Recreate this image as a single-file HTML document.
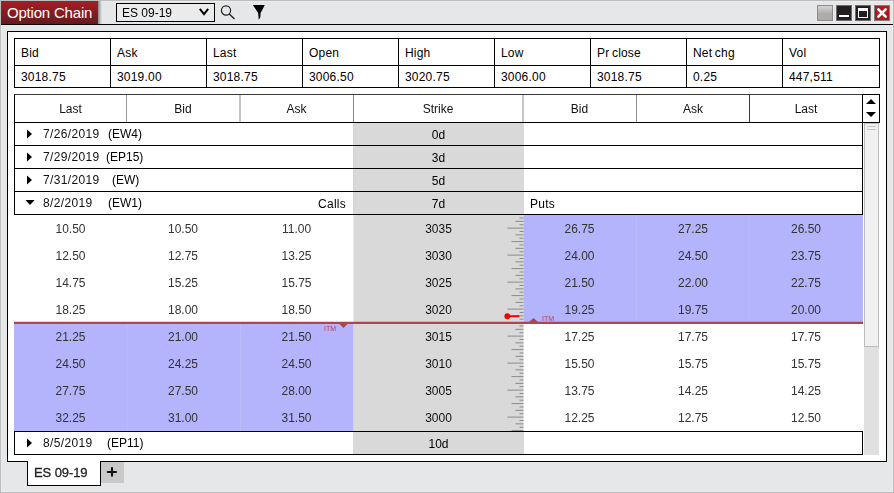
<!DOCTYPE html><html><head><meta charset="utf-8"><style>
*{margin:0;padding:0;box-sizing:border-box}
html,body{width:894px;height:493px;overflow:hidden}
body{position:relative;background:#e6e7e8;font-family:"Liberation Sans",sans-serif;font-size:12px;color:#000}
.a{position:absolute}
.t{position:absolute;white-space:nowrap;line-height:14px;will-change:transform}
.s{will-change:auto}
.c{text-align:center}
.r{text-align:right}
</style></head><body>
<div class="a" style="left:0;top:0;width:894px;height:493px;border:1px solid #bdbdbd"></div>
<div class="a" style="left:1px;top:1px;width:892px;height:491px;border:1px solid #ebecec"></div>
<div class="a" style="left:98px;top:1px;width:4px;height:23px;background:linear-gradient(to right,#8a8b8c,#e6e7e8)"></div>
<div class="a" style="left:1px;top:1px;width:97px;height:23px;background:linear-gradient(#b1161e,#a31d24 1px,#661a1e)"></div>
<div class="t s" style="left:7px;top:4px;font-size:15px;letter-spacing:-0.2px;line-height:17px;color:#fff">Option Chain</div>
<div class="a" style="left:1px;top:24px;width:892px;height:1px;background:#000"></div>
<div class="a" style="left:116px;top:3px;width:99px;height:19px;border:1px solid #000;background:#ebebeb"></div>
<div class="t" style="left:122px;top:6px;font-size:12px">ES 09-19</div>
<svg class="a" style="left:196px;top:6px" width="16" height="12"><path d="M3.8 2.9 L8 8.2 L12.2 2.9" fill="none" stroke="#000" stroke-width="1.9"/></svg>
<svg class="a" style="left:218px;top:3px" width="20" height="20"><circle cx="8" cy="7.5" r="4.6" fill="none" stroke="#222" stroke-width="1.2"/><path d="M11.3 11 L16.5 16" stroke="#222" stroke-width="1.4"/></svg>
<svg class="a" style="left:250px;top:3px" width="18" height="18"><path d="M2.8 2 H14.8 L10.6 10 L10.3 14.5 L8.7 16.8 L8.2 10 Z" fill="#000"/></svg>
<div class="a" style="left:817px;top:5px;width:16px;height:16px;border:1px solid #8d8d8d;background:linear-gradient(#d6d4d4,#b0acac 55%,#adaaaa)"></div>
<div class="a" style="left:836px;top:5px;width:16px;height:16px;border:1px solid #6d6d6d;background:#231f20"></div>
<div class="a" style="left:839px;top:15px;width:10px;height:2px;background:#fff"></div>
<div class="a" style="left:855px;top:5px;width:16px;height:16px;border:1px solid #6d6d6d;background:#231f20"></div>
<div class="a" style="left:858px;top:8px;width:10px;height:10px;border:1px solid #fff;border-top-width:3px"></div>
<div class="a" style="left:874px;top:5px;width:16px;height:16px;border:1px solid #7a8080;background:#ab191e"></div>
<svg class="a" style="left:874px;top:5px" width="16" height="16"><path d="M4.4 4.4 L11.6 11.6 M11.6 4.4 L4.4 11.6" stroke="#fff" stroke-width="2.7" stroke-linecap="round"/></svg>
<div class="a" style="left:7px;top:31px;width:880px;height:431px;border:1px solid #000;background:#fff"></div>
<div class="a" style="left:14px;top:38px;width:866px;height:50px;border:1px solid #000"></div>
<div class="a" style="left:14px;top:65px;width:866px;height:1px;background:#000"></div>
<div class="t s" style="left:21px;top:46px;letter-spacing:0.2px;word-spacing:-1px">Bid</div>
<div class="t s" style="left:21px;top:70px;letter-spacing:0.2px">3018.75</div>
<div class="a" style="left:110px;top:38px;width:1px;height:50px;background:#000"></div>
<div class="t s" style="left:117px;top:46px;letter-spacing:0.2px;word-spacing:-1px">Ask</div>
<div class="t s" style="left:117px;top:70px;letter-spacing:0.2px">3019.00</div>
<div class="a" style="left:206px;top:38px;width:1px;height:50px;background:#000"></div>
<div class="t s" style="left:213px;top:46px;letter-spacing:0.2px;word-spacing:-1px">Last</div>
<div class="t s" style="left:213px;top:70px;letter-spacing:0.2px">3018.75</div>
<div class="a" style="left:302px;top:38px;width:1px;height:50px;background:#000"></div>
<div class="t s" style="left:309px;top:46px;letter-spacing:0.2px;word-spacing:-1px">Open</div>
<div class="t s" style="left:309px;top:70px;letter-spacing:0.2px">3006.50</div>
<div class="a" style="left:398px;top:38px;width:1px;height:50px;background:#000"></div>
<div class="t s" style="left:405px;top:46px;letter-spacing:0.2px;word-spacing:-1px">High</div>
<div class="t s" style="left:405px;top:70px;letter-spacing:0.2px">3020.75</div>
<div class="a" style="left:494px;top:38px;width:1px;height:50px;background:#000"></div>
<div class="t s" style="left:501px;top:46px;letter-spacing:0.2px;word-spacing:-1px">Low</div>
<div class="t s" style="left:501px;top:70px;letter-spacing:0.2px">3006.00</div>
<div class="a" style="left:590px;top:38px;width:1px;height:50px;background:#000"></div>
<div class="t s" style="left:597px;top:46px;letter-spacing:0.2px;word-spacing:-1px">Pr close</div>
<div class="t s" style="left:597px;top:70px;letter-spacing:0.2px">3018.75</div>
<div class="a" style="left:686px;top:38px;width:1px;height:50px;background:#000"></div>
<div class="t s" style="left:693px;top:46px;letter-spacing:0.2px;word-spacing:-1px">Net chg</div>
<div class="t s" style="left:693px;top:70px;letter-spacing:0.2px">0.25</div>
<div class="a" style="left:782px;top:38px;width:1px;height:50px;background:#000"></div>
<div class="t s" style="left:789px;top:46px;letter-spacing:0.2px;word-spacing:-1px">Vol</div>
<div class="t s" style="left:789px;top:70px;letter-spacing:0.2px">447,511</div>
<div class="a" style="left:14px;top:94px;width:849px;height:29px;border:1px solid #000;border-top-color:#3a3a3a;border-right:none"></div>
<div class="t c" style="left:14px;top:102px;width:113px;color:#111">Last</div>
<div class="a" style="left:126px;top:95px;width:1px;height:27px;background:#9a9a9a"></div>
<div class="t c" style="left:126px;top:102px;width:114px;color:#111">Bid</div>
<div class="a" style="left:239px;top:95px;width:2px;height:27px;background:#c6c6c6"></div>
<div class="t c" style="left:239px;top:102px;width:115px;color:#111">Ask</div>
<div class="a" style="left:353px;top:95px;width:1px;height:27px;background:#8a8a8a"></div>
<div class="t c" style="left:353px;top:102px;width:170px;color:#111">Strike</div>
<div class="a" style="left:522px;top:95px;width:2px;height:27px;background:#c6c6c6"></div>
<div class="t c" style="left:522px;top:102px;width:115px;color:#111">Bid</div>
<div class="a" style="left:636px;top:95px;width:1px;height:27px;background:#8c8c8c"></div>
<div class="t c" style="left:636px;top:102px;width:114px;color:#111">Ask</div>
<div class="a" style="left:749px;top:95px;width:1px;height:27px;background:#3c3c3c"></div>
<div class="t c" style="left:749px;top:102px;width:114px;color:#111">Last</div>
<div class="a" style="left:862px;top:94px;width:18px;height:29px;border:1px solid #000"></div>
<svg class="a" style="left:863px;top:95px" width="16" height="27"><path d="M3 9 L8 4 L13 9 Z M3 17 L8 22 L13 17 Z" fill="#000"/></svg>
<div class="a" style="left:353px;top:123px;width:171px;height:92px;background:#d9d9d9"></div>
<div class="a" style="left:353px;top:123px;width:1px;height:92px;background:#d3d3d3"></div>
<div class="a" style="left:354px;top:215px;width:169px;height:216px;background:#d9d9d9"></div>
<div class="a" style="left:14px;top:122px;width:1px;height:24px;background:#000"></div>
<div class="a" style="left:862px;top:122px;width:1px;height:24px;background:#000"></div>
<div class="a" style="left:14px;top:145px;width:849px;height:1px;background:#000"></div>
<svg class="a" style="left:26px;top:129px" width="8" height="10"><path d="M1 0.5 L6 5 L1 9.5 Z" fill="#000"/></svg>
<div class="t" style="left:43px;top:127px;letter-spacing:0.35px;color:#111">7/26/2019</div>
<div class="t" style="left:108px;top:127px">(EW4)</div>
<div class="t c" style="left:353px;top:128px;width:171px">0d</div>
<div class="a" style="left:14px;top:145px;width:1px;height:24px;background:#000"></div>
<div class="a" style="left:862px;top:145px;width:1px;height:24px;background:#000"></div>
<div class="a" style="left:14px;top:168px;width:849px;height:1px;background:#000"></div>
<svg class="a" style="left:26px;top:152px" width="8" height="10"><path d="M1 0.5 L6 5 L1 9.5 Z" fill="#000"/></svg>
<div class="t" style="left:43px;top:150px;letter-spacing:0.35px;color:#111">7/29/2019</div>
<div class="t" style="left:106px;top:150px">(EP15)</div>
<div class="t c" style="left:353px;top:151px;width:171px">3d</div>
<div class="a" style="left:14px;top:168px;width:1px;height:24px;background:#000"></div>
<div class="a" style="left:862px;top:168px;width:1px;height:24px;background:#000"></div>
<div class="a" style="left:14px;top:191px;width:849px;height:1px;background:#000"></div>
<svg class="a" style="left:26px;top:175px" width="8" height="10"><path d="M1 0.5 L6 5 L1 9.5 Z" fill="#000"/></svg>
<div class="t" style="left:43px;top:173px;letter-spacing:0.35px;color:#111">7/31/2019</div>
<div class="t" style="left:111.5px;top:173px">(EW)</div>
<div class="t c" style="left:353px;top:174px;width:171px">5d</div>
<div class="a" style="left:14px;top:191px;width:1px;height:24px;background:#000"></div>
<div class="a" style="left:862px;top:191px;width:1px;height:24px;background:#000"></div>
<div class="a" style="left:14px;top:214px;width:849px;height:1px;background:#000"></div>
<svg class="a" style="left:25px;top:199px" width="10" height="7"><path d="M0.5 1 L9.5 1 L5 6 Z" fill="#000"/></svg>
<div class="t" style="left:43px;top:196px;letter-spacing:0.35px;color:#111">8/2/2019</div>
<div class="t" style="left:108px;top:196px">(EW1)</div>
<div class="t c" style="left:353px;top:197px;width:171px">7d</div>
<div class="t r" style="left:250px;top:197px;width:96px;letter-spacing:0.25px">Calls</div>
<div class="t" style="left:530px;top:197px;letter-spacing:0.25px">Puts</div>
<div class="a" style="left:523px;top:215px;width:340px;height:27px;background:#b4b4fc"></div>
<div class="t c" style="left:14px;top:222px;width:113px;color:#333">10.50</div>
<div class="t c" style="left:522px;top:222px;width:115px;color:#333">26.75</div>
<div class="t c" style="left:126px;top:222px;width:114px;color:#333">10.50</div>
<div class="t c" style="left:636px;top:222px;width:114px;color:#333">27.25</div>
<div class="t c" style="left:239px;top:222px;width:115px;color:#333">11.00</div>
<div class="t c" style="left:749px;top:222px;width:114px;color:#333">26.50</div>
<div class="t c" style="left:353px;top:222px;width:171px;color:#111">3035</div>
<div class="a" style="left:523px;top:242px;width:340px;height:27px;background:#b4b4fc"></div>
<div class="t c" style="left:14px;top:249px;width:113px;color:#333">12.50</div>
<div class="t c" style="left:522px;top:249px;width:115px;color:#333">24.00</div>
<div class="t c" style="left:126px;top:249px;width:114px;color:#333">12.75</div>
<div class="t c" style="left:636px;top:249px;width:114px;color:#333">24.50</div>
<div class="t c" style="left:239px;top:249px;width:115px;color:#333">13.25</div>
<div class="t c" style="left:749px;top:249px;width:114px;color:#333">23.75</div>
<div class="t c" style="left:353px;top:249px;width:171px;color:#111">3030</div>
<div class="a" style="left:523px;top:269px;width:340px;height:27px;background:#b4b4fc"></div>
<div class="t c" style="left:14px;top:276px;width:113px;color:#333">14.75</div>
<div class="t c" style="left:522px;top:276px;width:115px;color:#333">21.50</div>
<div class="t c" style="left:126px;top:276px;width:114px;color:#333">15.25</div>
<div class="t c" style="left:636px;top:276px;width:114px;color:#333">22.00</div>
<div class="t c" style="left:239px;top:276px;width:115px;color:#333">15.75</div>
<div class="t c" style="left:749px;top:276px;width:114px;color:#333">22.75</div>
<div class="t c" style="left:353px;top:276px;width:171px;color:#111">3025</div>
<div class="a" style="left:523px;top:296px;width:340px;height:27px;background:#b4b4fc"></div>
<div class="t c" style="left:14px;top:303px;width:113px;color:#333">18.25</div>
<div class="t c" style="left:522px;top:303px;width:115px;color:#333">19.25</div>
<div class="t c" style="left:126px;top:303px;width:114px;color:#333">18.00</div>
<div class="t c" style="left:636px;top:303px;width:114px;color:#333">19.75</div>
<div class="t c" style="left:239px;top:303px;width:115px;color:#333">18.50</div>
<div class="t c" style="left:749px;top:303px;width:114px;color:#333">20.00</div>
<div class="t c" style="left:353px;top:303px;width:171px;color:#111">3020</div>
<div class="a" style="left:14px;top:323px;width:339px;height:27px;background:#b4b4fc"></div>
<div class="t c" style="left:14px;top:330px;width:113px;color:#333">21.25</div>
<div class="t c" style="left:522px;top:330px;width:115px;color:#333">17.25</div>
<div class="t c" style="left:126px;top:330px;width:114px;color:#333">21.00</div>
<div class="t c" style="left:636px;top:330px;width:114px;color:#333">17.75</div>
<div class="t c" style="left:239px;top:330px;width:115px;color:#333">21.50</div>
<div class="t c" style="left:749px;top:330px;width:114px;color:#333">17.75</div>
<div class="t c" style="left:353px;top:330px;width:171px;color:#111">3015</div>
<div class="a" style="left:14px;top:350px;width:339px;height:27px;background:#b4b4fc"></div>
<div class="t c" style="left:14px;top:357px;width:113px;color:#333">24.50</div>
<div class="t c" style="left:522px;top:357px;width:115px;color:#333">15.50</div>
<div class="t c" style="left:126px;top:357px;width:114px;color:#333">24.25</div>
<div class="t c" style="left:636px;top:357px;width:114px;color:#333">15.75</div>
<div class="t c" style="left:239px;top:357px;width:115px;color:#333">24.50</div>
<div class="t c" style="left:749px;top:357px;width:114px;color:#333">15.75</div>
<div class="t c" style="left:353px;top:357px;width:171px;color:#111">3010</div>
<div class="a" style="left:14px;top:377px;width:339px;height:27px;background:#b4b4fc"></div>
<div class="t c" style="left:14px;top:384px;width:113px;color:#333">27.75</div>
<div class="t c" style="left:522px;top:384px;width:115px;color:#333">13.75</div>
<div class="t c" style="left:126px;top:384px;width:114px;color:#333">27.50</div>
<div class="t c" style="left:636px;top:384px;width:114px;color:#333">14.25</div>
<div class="t c" style="left:239px;top:384px;width:115px;color:#333">28.00</div>
<div class="t c" style="left:749px;top:384px;width:114px;color:#333">14.25</div>
<div class="t c" style="left:353px;top:384px;width:171px;color:#111">3005</div>
<div class="a" style="left:14px;top:404px;width:339px;height:27px;background:#b4b4fc"></div>
<div class="t c" style="left:14px;top:411px;width:113px;color:#333">32.25</div>
<div class="t c" style="left:522px;top:411px;width:115px;color:#333">12.25</div>
<div class="t c" style="left:126px;top:411px;width:114px;color:#333">31.00</div>
<div class="t c" style="left:636px;top:411px;width:114px;color:#333">12.75</div>
<div class="t c" style="left:239px;top:411px;width:115px;color:#333">31.50</div>
<div class="t c" style="left:749px;top:411px;width:114px;color:#333">12.50</div>
<div class="t c" style="left:353px;top:411px;width:171px;color:#111">3000</div>
<div class="a" style="left:353px;top:215px;width:1px;height:108px;background:#ececec"></div>
<div class="a" style="left:523px;top:215px;width:1px;height:107px;background:#cdcdf0"></div>
<div class="a" style="left:523px;top:324px;width:1px;height:107px;background:#ececec"></div>
<div class="a" style="left:353px;top:323px;width:1px;height:108px;background:#d2d2ea"></div>
<div class="a" style="left:127px;top:324px;width:1px;height:107px;background:#b8b8fc"></div>
<div class="a" style="left:240px;top:324px;width:1px;height:107px;background:#bcbcfb"></div>
<div class="a" style="left:636px;top:215px;width:1px;height:107px;background:#bcbcfb"></div>
<div class="a" style="left:749px;top:215px;width:1px;height:107px;background:#b8b8fc"></div>
<svg class="a" style="left:0;top:0" width="894" height="493"><path d="M519.5 217.975 H523.5 M515.5 221.350 H523.5 M519.5 224.725 H523.5 M507.5 228.100 H523.5 M519.5 231.475 H523.5 M515.5 234.850 H523.5 M519.5 238.225 H523.5 M511.5 241.600 H523.5 M519.5 244.975 H523.5 M515.5 248.350 H523.5 M519.5 251.725 H523.5 M507.5 255.100 H523.5 M519.5 258.475 H523.5 M515.5 261.850 H523.5 M519.5 265.225 H523.5 M511.5 268.600 H523.5 M519.5 271.975 H523.5 M515.5 275.350 H523.5 M519.5 278.725 H523.5 M507.5 282.100 H523.5 M519.5 285.475 H523.5 M515.5 288.850 H523.5 M519.5 292.225 H523.5 M511.5 295.600 H523.5 M519.5 298.975 H523.5 M515.5 302.350 H523.5 M519.5 305.725 H523.5 M507.5 309.100 H523.5 M519.5 312.475 H523.5 M515.5 315.850 H523.5 M519.5 319.225 H523.5 M511.5 322.600 H523.5 M519.5 325.975 H523.5 M515.5 329.350 H523.5 M519.5 332.725 H523.5 M507.5 336.100 H523.5 M519.5 339.475 H523.5 M515.5 342.850 H523.5 M519.5 346.225 H523.5 M511.5 349.600 H523.5 M519.5 352.975 H523.5 M515.5 356.350 H523.5 M519.5 359.725 H523.5 M507.5 363.100 H523.5 M519.5 366.475 H523.5 M515.5 369.850 H523.5 M519.5 373.225 H523.5 M511.5 376.600 H523.5 M519.5 379.975 H523.5 M515.5 383.350 H523.5 M519.5 386.725 H523.5 M507.5 390.100 H523.5 M519.5 393.475 H523.5 M515.5 396.850 H523.5 M519.5 400.225 H523.5 M511.5 403.600 H523.5 M519.5 406.975 H523.5 M515.5 410.350 H523.5 M519.5 413.725 H523.5 M507.5 417.100 H523.5 M519.5 420.475 H523.5 M515.5 423.850 H523.5 M519.5 427.225 H523.5 M511.5 430.600 H523.5" stroke="#8a8a8a" stroke-width="1"/></svg>
<div class="a" style="left:14px;top:321px;width:849px;height:1px;background:rgba(172,70,80,0.25)"></div>
<div class="a" style="left:14px;top:322px;width:849px;height:2px;background:#ac4650"></div>
<svg class="a" style="left:0;top:0" width="894" height="493"><path d="M338.5 323 L348.5 323 L343.5 328 Z" fill="#ac4650"/><path d="M529 322 L538 322 L533.5 318 Z" fill="#ac4650"/><circle cx="507.4" cy="316.2" r="3" fill="#f00"/><path d="M507 316.2 H519.3" stroke="#f00" stroke-width="2"/></svg>
<div class="t" style="left:324px;top:325px;font-size:7px;line-height:8px;color:#b8404c">ITM</div>
<div class="t" style="left:541.5px;top:315px;font-size:7px;line-height:8px;color:#b8404c">ITM</div>
<div class="a" style="left:14px;top:431px;width:849px;height:24px;border:1px solid #000"></div>
<div class="a" style="left:353px;top:432px;width:171px;height:22px;background:#d9d9d9"></div>
<svg class="a" style="left:26px;top:438px" width="8" height="10"><path d="M1 0.5 L6 5 L1 9.5 Z" fill="#000"/></svg>
<div class="t" style="left:43px;top:436px;letter-spacing:0.35px;color:#111">8/5/2019</div>
<div class="t" style="left:107px;top:436px">(EP11)</div>
<div class="t c" style="left:353px;top:437px;width:171px">10d</div>
<div class="a" style="left:864px;top:123px;width:15px;height:332px;background:#e0e0e0"></div>
<div class="a" style="left:864px;top:123px;width:15px;height:224px;border:1px solid #bdbdbd;background:#f0f0f0"></div>
<div class="a" style="left:867px;top:126px;width:9px;height:1px;background:#c8c8c8"></div>
<div class="a" style="left:867px;top:129px;width:9px;height:1px;background:#c8c8c8"></div>
<div class="a" style="left:27px;top:461px;width:74px;height:25px;border:1px solid #000;border-top:none;background:#fff"></div>
<div class="t" style="left:34px;top:465.5px;font-size:13px;letter-spacing:-0.1px;-webkit-text-stroke:0.3px #222;color:#222">ES 09-19</div>
<div class="a" style="left:101px;top:462px;width:23px;height:21px;background:#c9c9c9"></div>
<svg class="a" style="left:101px;top:462px" width="23" height="20"><path d="M6.8 10 H15 M11 6 V13.7" stroke="#111" stroke-width="2.1" stroke-linecap="round"/></svg>
</body></html>
